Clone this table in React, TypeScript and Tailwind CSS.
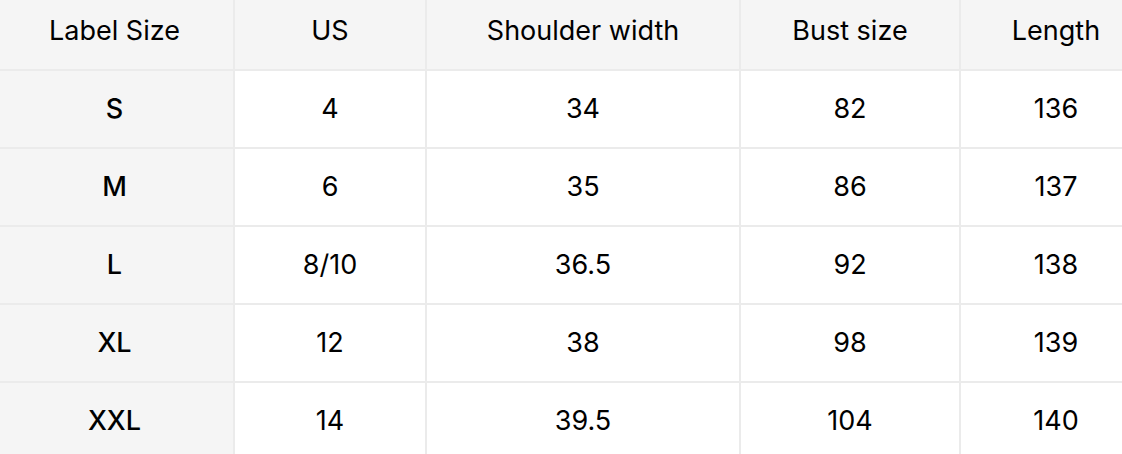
import React from "react";

const headers = ["Label Size", "US", "Shoulder width", "Bust size", "Length"];
const rows = [
  ["S", "4", "34", "82", "136"],
  ["M", "6", "35", "86", "137"],
  ["L", "8/10", "36.5", "92", "138"],
  ["XL", "12", "38", "98", "139"],
  ["XXL", "14", "39.5", "104", "140"],
];

export default function App() {
  return (
    <div className="w-[1122px] h-[454px] overflow-hidden bg-white" style={{ fontFamily: "Inter, 'Noto Sans', sans-serif" }}>
      <div className="-mt-[7px] -ml-[4px] w-[1155px] grid grid-cols-[237px_190px_312px_218px_190px] auto-rows-[76px] gap-[2px] bg-[#ebebeb] text-[27px] text-black">
        {headers.map((h) => (
          <div key={h} className="bg-[#f5f5f5] flex items-center justify-center">
            {h}
          </div>
        ))}
        {rows.map((r) =>
          r.map((c, i) => (
            <div
              key={r[0] + i}
              className={
                i === 0
                  ? "bg-[#f5f5f5] flex items-center justify-center font-medium"
                  : "bg-white flex items-center justify-center"
              }
            >
              {c}
            </div>
          ))
        )}
      </div>
    </div>
  );
}
